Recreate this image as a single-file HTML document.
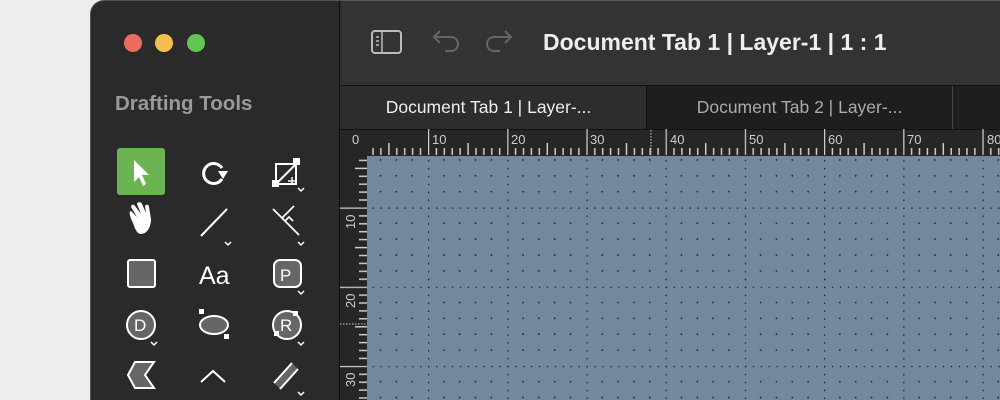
<!DOCTYPE html>
<html><head><meta charset="utf-8"><style>
*{margin:0;padding:0;box-sizing:border-box}
html,body{width:1000px;height:400px;overflow:hidden}
body{background:#ededed;position:relative;font-family:"Liberation Sans",sans-serif}
.win{position:absolute;left:90px;top:0;width:920px;height:400px;border-radius:14px 0 0 0;overflow:hidden;background:#2a2a2a;border:1px solid #555;border-bottom:none}
.side{position:absolute;left:0;top:0;width:249px;height:400px;background:#2a2a2a;border-right:1px solid #111}
.dot{position:absolute;top:33px;width:18px;height:18px;border-radius:50%}
.title{position:absolute;left:250px;top:0;right:0;height:84px;background:#333}
.tabs{position:absolute;left:250px;top:84px;right:0;height:45px;background:#1e1e1e;border-top:1px solid #111}
.tab{position:absolute;top:0;height:44px;line-height:42px;text-align:center;font-size:17.5px;width:306px}
</style></head><body>
<div class="win">
 <div class="side">
  <div class="dot" style="left:33px;background:#ec6a5e"></div>
  <div class="dot" style="left:64px;background:#f4bf4f"></div>
  <div class="dot" style="left:96px;background:#61c554"></div>
  <div style="position:absolute;left:24px;top:91px;color:#9a9a9a;font-size:20.5px;font-weight:bold">Drafting Tools</div>
  <svg width="249" height="400" style="position:absolute;left:0;top:0" fill="none" stroke="#fff" stroke-width="2">
   <rect x="26" y="147" width="48" height="47" rx="3" fill="#6cb352" stroke="none"/>
   <path d="M43 159 L43 181 L48 176 L52 185 L55 183 L51 174 L58 174 Z" fill="#fff" stroke="none"/>
   <path d="M131 167 A10 10 0 1 0 131 178" stroke-width="3"/>
   <path d="M127 170 L137 170 L132 178 Z" fill="#fff" stroke="none"/>
   <rect x="185" y="163" width="20" height="20"/><path d="M185 183 L205 163"/><rect x="182" y="180" width="5" height="5" fill="#fff"/><rect x="203" y="158" width="5" height="5" fill="#fff"/><path d="M201 176v8M197 180h8" stroke-width="1.5"/>
   <path d="M207 187l3 3 3-3M134 241l3 3 3-3M207 241l3 3 3-3M207 290l3 3 3-3M60 341l3 3 3-3M207 341l3 3 3-3M207 391l3 3 3-3" stroke-width="1.5"/>
   <path d="M42 222 C38 214 38 210 40 210 L46 216 L40 206 C40 203 43 203 44 205 L50 213 L46 203 C47 200 50 201 51 203 L55 212 L54 205 C55 203 58 203 58 206 L60 218 C60 226 56 233 50 233 C46 233 44 228 42 222 Z" fill="#fff" stroke="none"/>
   <path d="M110 235 L136 208"/>
   <path d="M182 208 L208 234 M191 217 L203 205 M194 220 L198 216 L202 220" stroke-width="1.8"/>
   <rect x="37" y="259" width="27" height="27" rx="2" fill="#666"/>
   <text x="108" y="283" font-family="Liberation Sans" font-size="25" fill="#fff" stroke="none">Aa</text>
   <rect x="183" y="259" width="27" height="27" rx="6" fill="#666"/><text x="189" y="280" font-family="Liberation Sans" font-size="17" fill="#fff" stroke="none">P</text>
   <circle cx="50" cy="324" r="14" fill="#666"/><text x="43" y="330" font-family="Liberation Sans" font-size="17" fill="#fff" stroke="none">D</text>
   <ellipse cx="123" cy="324" rx="14" ry="9" fill="#666"/><rect x="108" y="308" width="5" height="5" fill="#fff" stroke="none"/><rect x="133" y="333" width="5" height="5" fill="#fff" stroke="none"/>
   <circle cx="196" cy="324" r="14" fill="#666"/><text x="189" y="330" font-family="Liberation Sans" font-size="17" fill="#fff" stroke="none">R</text><rect x="202" y="310" width="5" height="5" fill="#fff" stroke="none"/><rect x="183" y="330" width="5" height="5" fill="#fff" stroke="none"/>
   <path d="M44 361 L63 361 L54 374 L63 387 L44 387 L37 374 Z" fill="#666"/>
   <path d="M110 381 L122 370 L134 381" />
   <path d="M183 382 L201 362 L207 368 L189 388 Z" fill="#666" stroke="none"/>
   <path d="M183 382 L201 362 M189 388 L207 368" />
  </svg>
 </div>
 <div class="title">
  <svg width="620" height="84" fill="none" stroke="#9a9a9a" stroke-width="2">
   <rect x="31" y="30" width="29" height="22" rx="3" stroke="#bbb"/><path d="M41 30v22M35 36h3M35 40h3M35 44h3" stroke="#bbb" stroke-width="1.5"/>
   <path d="M99 42 L93 36 L99 30 M93 36 H110 A7 7 0 0 1 110 50 H104" stroke="#666"/>
   <path d="M164 42 L170 36 L164 30 M170 36 H153 A7 7 0 0 0 153 50 H159" stroke="#666"/>
  </svg>
  <div style="position:absolute;left:202px;top:28px;color:#eee;font-size:23px;font-weight:bold">Document Tab 1 | Layer-1 | 1 : 1</div>
 </div>
 <div class="tabs">
  <div class="tab" style="left:0;background:#2d2d2d;color:#eee;border-right:1px solid #111;padding-right:10px">Document Tab 1 | Layer-...</div>
  <div class="tab" style="left:306px;color:#aaa;border-right:1px solid #444">Document Tab 2 | Layer-...</div>
 </div>
</div>
<svg width="1000" height="400" style="position:absolute;left:0;top:0">
 <defs>
  <pattern id="g" patternUnits="userSpaceOnUse" x="428" y="207.5" width="79.2" height="79.2">
   <g fill="#1c232c">
    <circle cx="15.84" cy="15.84" r="0.9"/><circle cx="31.68" cy="15.84" r="0.9"/><circle cx="47.52" cy="15.84" r="0.9"/><circle cx="63.36" cy="15.84" r="0.9"/>
    <circle cx="15.84" cy="31.68" r="0.9"/><circle cx="31.68" cy="31.68" r="0.9"/><circle cx="47.52" cy="31.68" r="0.9"/><circle cx="63.36" cy="31.68" r="0.9"/>
    <circle cx="15.84" cy="47.52" r="0.9"/><circle cx="31.68" cy="47.52" r="0.9"/><circle cx="47.52" cy="47.52" r="0.9"/><circle cx="63.36" cy="47.52" r="0.9"/>
    <circle cx="15.84" cy="63.36" r="0.9"/><circle cx="31.68" cy="63.36" r="0.9"/><circle cx="47.52" cy="63.36" r="0.9"/><circle cx="63.36" cy="63.36" r="0.9"/>
   </g>
   <line x1="0.5" y1="0" x2="0.5" y2="79.2" stroke="#1c232c" stroke-width="1.5" stroke-dasharray="1.5 6.42"/>
   <line x1="0" y1="0.5" x2="79.2" y2="0.5" stroke="#1c232c" stroke-width="1.5" stroke-dasharray="1.5 6.42"/>
  </pattern>
  <pattern id="hr" patternUnits="userSpaceOnUse" x="428" y="0" width="79.2" height="400">
   <line x1="0.5" y1="129" x2="0.5" y2="155" stroke="#ccc" stroke-width="1.5"/>
   <g stroke="#ccc" stroke-width="1.5">
    <line x1="8.4" y1="148" x2="8.4" y2="155"/><line x1="16.3" y1="148" x2="16.3" y2="155"/><line x1="24.2" y1="148" x2="24.2" y2="155"/><line x1="32.1" y1="148" x2="32.1" y2="155"/>
    <line x1="40.1" y1="143" x2="40.1" y2="155"/><line x1="48" y1="148" x2="48" y2="155"/><line x1="55.9" y1="148" x2="55.9" y2="155"/><line x1="63.8" y1="148" x2="63.8" y2="155"/><line x1="71.7" y1="148" x2="71.7" y2="155"/>
   </g>
  </pattern>
  <pattern id="vr" patternUnits="userSpaceOnUse" x="0" y="207.5" width="400" height="79.2">
   <line x1="340" y1="0.5" x2="367" y2="0.5" stroke="#ccc" stroke-width="1.5"/>
   <g stroke="#ccc" stroke-width="1.5">
    <line x1="359" y1="8.4" x2="367" y2="8.4"/><line x1="359" y1="16.3" x2="367" y2="16.3"/><line x1="359" y1="24.2" x2="367" y2="24.2"/><line x1="359" y1="32.1" x2="367" y2="32.1"/>
    <line x1="355" y1="40.1" x2="367" y2="40.1"/><line x1="359" y1="48" x2="367" y2="48"/><line x1="359" y1="55.9" x2="367" y2="55.9"/><line x1="359" y1="63.8" x2="367" y2="63.8"/><line x1="359" y1="71.7" x2="367" y2="71.7"/>
   </g>
  </pattern>
 </defs>
 <rect x="340" y="129" width="660" height="27" fill="#262626"/>
 <rect x="340" y="129" width="27" height="271" fill="#262626"/>
 <rect x="340" y="129" width="660" height="1" fill="#111"/>
 <rect x="367" y="129" width="633" height="27" fill="url(#hr)"/>
 <rect x="340" y="156" width="27" height="244" fill="url(#vr)"/>
 <rect x="367" y="156" width="633" height="244" fill="#73889f"/>
 <rect x="367" y="156" width="633" height="244" fill="url(#g)"/>
 <line x1="651" y1="130" x2="651" y2="155" stroke="#ccc" stroke-dasharray="1.5 1.5"/>
 <line x1="340" y1="324" x2="367" y2="324" stroke="#ccc" stroke-dasharray="1.5 1.5"/>
 <g font-family="Liberation Sans" font-size="13" fill="#ccc">
  <text x="352" y="144">0</text><text x="432" y="144">10</text><text x="511" y="144">20</text><text x="590" y="144">30</text><text x="670" y="144">40</text><text x="749" y="144">50</text><text x="828" y="144">60</text><text x="907" y="144">70</text><text x="987" y="144">80</text>
  <text transform="translate(355,229) rotate(-90)">10</text>
  <text transform="translate(355,308) rotate(-90)">20</text>
  <text transform="translate(355,387) rotate(-90)">30</text>
 </g>
</svg>
</body></html>
